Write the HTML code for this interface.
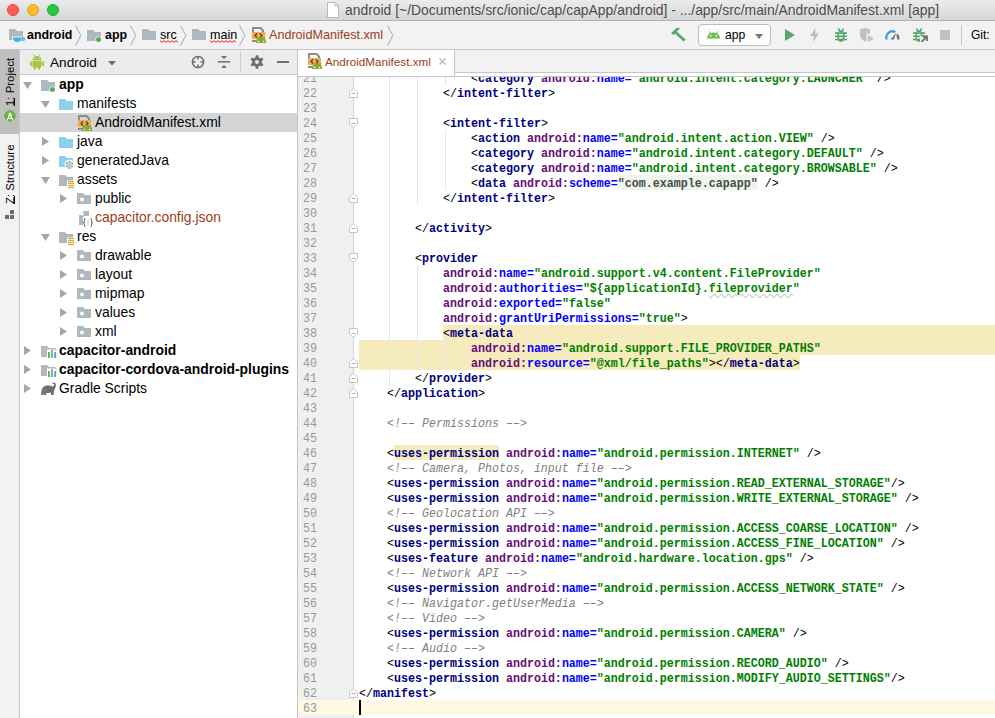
<!DOCTYPE html>
<html><head><meta charset="utf-8">
<style>
*{margin:0;padding:0;box-sizing:border-box}
html,body{width:995px;height:718px;overflow:hidden;background:#fff;font-family:"Liberation Sans",sans-serif;position:relative}
.a{position:absolute}
.tl{width:12px;height:12px;border-radius:50%;top:4px}
.bc{top:28px;font-size:12.6px;color:#000;white-space:nowrap;line-height:15px}
.tr{height:19px;font-size:13.9px;line-height:19px;white-space:nowrap;color:#000}
.ln{position:absolute;left:297px;width:20px;text-align:right;font-family:"Liberation Mono",monospace;font-size:11.67px;line-height:15px;color:#999;white-space:pre;transform:scaleY(1.13);transform-origin:0 10px}
.cl{position:absolute;left:359px;height:15px;line-height:15px;font-family:"Liberation Mono",monospace;font-size:11.67px;font-weight:bold;white-space:pre;color:#000;transform:scaleY(1.1);transform-origin:0 10px}
.t{color:#000080}.br{color:#000;font-weight:normal}.ns{color:#660e7a}.at{color:#0000ff}.v{color:#008000}.c{color:#808080;font-style:italic;font-weight:normal}
.hl{color:#000080}.sch{color:#4a4a4a}.typo{color:#008000;text-decoration:underline wavy #b8d0b8;text-decoration-thickness:0.6px}
</style></head><body>
<div class="a" style="left:0;top:0;width:995px;height:21px;background:linear-gradient(#ececec,#d6d6d6);border-bottom:1px solid #b4b4b4"></div>
<div class="a tl" style="left:7px;background:#fd5f57;border:0.5px solid #e0443e"></div>
<div class="a tl" style="left:27px;background:#febc2e;border:0.5px solid #dea123"></div>
<div class="a tl" style="left:47px;background:#28c840;border:0.5px solid #1aab29"></div>
<svg class="a" style="left:327px;top:2px" width="12" height="16" viewBox="0 0 12 16"><path d="M0.5,0.5H8L11.5,4V15.5H0.5Z" fill="#fff" stroke="#b8b8b8"/><path d="M8,0.5V4H11.5" fill="none" stroke="#b8b8b8"/></svg>
<div class="a" style="left:345px;top:2px;font-size:13.9px;line-height:17px;color:#4d4d4d;white-space:nowrap">android [~/Documents/src/ionic/cap/capApp/android] - .../app/src/main/AndroidManifest.xml [app]</div>

<div class="a" style="left:0;top:21px;width:995px;height:29px;background:#f2f2f2;border-bottom:1px solid #c6c6c6"></div>
<div class="a bc" style="left:27px;font-weight:bold;font-size:12.4px">android</div><div class="a bc" style="left:105px;font-weight:bold;font-size:12.4px">app</div><div class="a bc" style="left:160px;">src</div><div class="a bc" style="left:210px;">main</div><div class="a bc" style="left:269px;color:#9e3c1c">AndroidManifest.xml</div>

<div class="a" style="left:0;top:50px;width:20px;height:668px;background:#f2f2f2;border-right:1px solid #c6c6c6"></div>
<div class="a" style="left:0;top:50px;width:19px;height:84px;background:#bfbfbf"></div>
<div class="a" style="left:20px;top:50px;width:277px;height:25px;background:#ececec;border-bottom:1px solid #c6c6c6"></div>
<div class="a" style="left:23px;top:82px;line-height:0"><svg width="9" height="8" viewBox="0 0 9 8"><path d="M0,0H9L4.5,7Z" fill="#a6a6a6"/></svg></div><div class="a" style="left:41px;top:77px;line-height:0"><svg width="16" height="17" viewBox="0 0 16 17"><path d="M0,3H6L8,5H14V14H0Z" fill="#adb8bf"/><circle cx="11.5" cy="12.5" r="3.1" fill="#fff"/><circle cx="11.5" cy="12.5" r="2.5" fill="#59a869"/></svg></div><div class="a tr" style="left:59px;top:75px;font-weight:bold;">app</div><div class="a" style="left:41px;top:101px;line-height:0"><svg width="9" height="8" viewBox="0 0 9 8"><path d="M0,0H9L4.5,7Z" fill="#a6a6a6"/></svg></div><div class="a" style="left:59px;top:96px;line-height:0"><svg width="16" height="17" viewBox="0 0 16 17"><path d="M0,3H6L8,5H14V14H0Z" fill="#8dd0ee"/></svg></div><div class="a tr" style="left:77px;top:94px;">manifests</div><div class="a" style="left:20px;top:113px;width:277px;height:19px;background:#d5d5d5"></div><div class="a" style="left:77px;top:115px;line-height:0"><svg width="16" height="17" viewBox="0 0 16 17"><g transform="translate(1,0)"><path d="M1,1H8.5L11,3.5V5" fill="none" stroke="#8c8c8c" stroke-width="2"/><path d="M1,0V5" stroke="#8c8c8c" stroke-width="2"/><rect x="0" y="5" width="13" height="7" fill="#f4a94c"/><path d="M5,6.5L3,8.5L5,10.5M8,6.5L10,8.5L8,10.5" fill="none" stroke="#3c3c3c" stroke-width="1.1"/><rect x="0" y="13" width="4" height="2" fill="#8c8c8c"/><path d="M4,16V14.5A5,4.5 0 0 1 14,14.5V16Z" fill="#86ab2f"/><path d="M5,10L6,11.5M13,10L12,11.5" stroke="#86ab2f"/><circle cx="6.5" cy="14.5" r="0.8" fill="#fff"/><circle cx="11.5" cy="14.5" r="0.8" fill="#fff"/></g></svg></div><div class="a tr" style="left:95px;top:113px;">AndroidManifest.xml</div><div class="a" style="left:42px;top:137px;line-height:0"><svg width="8" height="9" viewBox="0 0 8 9"><path d="M0,0V9L7,4.5Z" fill="#a6a6a6"/></svg></div><div class="a" style="left:59px;top:134px;line-height:0"><svg width="16" height="17" viewBox="0 0 16 17"><path d="M0,3H6L8,5H14V14H0Z" fill="#8dd0ee"/></svg></div><div class="a tr" style="left:77px;top:132px;">java</div><div class="a" style="left:42px;top:156px;line-height:0"><svg width="8" height="9" viewBox="0 0 8 9"><path d="M0,0V9L7,4.5Z" fill="#a6a6a6"/></svg></div><div class="a" style="left:59px;top:153px;line-height:0"><svg width="16" height="17" viewBox="0 0 16 17"><path d="M0,3H6L8,5H14V14H0Z" fill="#8dd0ee"/><circle cx="10.5" cy="11.8" r="5" fill="#fff"/><path d="M10.5,11.8L9.2,7.8A4.3,4.3 0 0 1 12.5,8.2Z" fill="#adb8bf" transform="rotate(0 10.5 11.8)"/><path d="M10.5,11.8L9.2,7.8A4.3,4.3 0 0 1 12.5,8.2Z" fill="#adb8bf" transform="rotate(60 10.5 11.8)"/><path d="M10.5,11.8L9.2,7.8A4.3,4.3 0 0 1 12.5,8.2Z" fill="#adb8bf" transform="rotate(120 10.5 11.8)"/><path d="M10.5,11.8L9.2,7.8A4.3,4.3 0 0 1 12.5,8.2Z" fill="#adb8bf" transform="rotate(180 10.5 11.8)"/><path d="M10.5,11.8L9.2,7.8A4.3,4.3 0 0 1 12.5,8.2Z" fill="#adb8bf" transform="rotate(240 10.5 11.8)"/><path d="M10.5,11.8L9.2,7.8A4.3,4.3 0 0 1 12.5,8.2Z" fill="#adb8bf" transform="rotate(300 10.5 11.8)"/></svg></div><div class="a tr" style="left:77px;top:151px;">generatedJava</div><div class="a" style="left:41px;top:177px;line-height:0"><svg width="9" height="8" viewBox="0 0 9 8"><path d="M0,0H9L4.5,7Z" fill="#a6a6a6"/></svg></div><div class="a" style="left:59px;top:172px;line-height:0"><svg width="16" height="17" viewBox="0 0 16 17"><path d="M0,3H6L8,5H14V14H0Z" fill="#adb8bf"/><rect x="8" y="8.5" width="8" height="8.5" fill="#fff"/><g fill="#e3a33b"><rect x="9" y="9" width="6" height="1.2"/><rect x="9" y="11" width="6" height="1.2"/><rect x="9" y="13" width="6" height="1.2"/><rect x="9" y="15" width="6" height="1.2"/></g></svg></div><div class="a tr" style="left:77px;top:170px;">assets</div><div class="a" style="left:60px;top:194px;line-height:0"><svg width="8" height="9" viewBox="0 0 8 9"><path d="M0,0V9L7,4.5Z" fill="#a6a6a6"/></svg></div><div class="a" style="left:77px;top:191px;line-height:0"><svg width="16" height="17" viewBox="0 0 16 17"><path d="M0,2H6L8,4H14V13H0Z" fill="#adb8bf"/><circle cx="5" cy="8.6" r="2" fill="#fff"/></svg></div><div class="a tr" style="left:95px;top:189px;">public</div><div class="a" style="left:77px;top:210px;line-height:0"><svg width="16" height="17" viewBox="0 0 16 17"><path d="M2,5.5L6.5,1H12V6H7V15H2Z" fill="#adb8bf"/><path d="M2.5,5.2L6.5,1.2V5.2Z" fill="#fff"/><rect x="6" y="7" width="10" height="10" fill="#fff"/><path d="M8.5,8.5C7,8.5 7.5,10.5 7.5,11C7.5,12 6.5,12.5 6.5,12.5C6.5,12.5 7.5,13 7.5,14C7.5,14.5 7,16.5 8.5,16.5M13.5,8.5C15,8.5 14.5,10.5 14.5,11C14.5,12 15.5,12.5 15.5,12.5C15.5,12.5 14.5,13 14.5,14C14.5,14.5 15,16.5 13.5,16.5" fill="none" stroke="#6e7a82" stroke-width="1.1"/><path d="M11,9.5V15.5" stroke="#c0c8ce" stroke-width="1"/></svg></div><div class="a tr" style="left:95px;top:208px;color:#9e3c1c;">capacitor.config.json</div><div class="a" style="left:41px;top:234px;line-height:0"><svg width="9" height="8" viewBox="0 0 9 8"><path d="M0,0H9L4.5,7Z" fill="#a6a6a6"/></svg></div><div class="a" style="left:59px;top:229px;line-height:0"><svg width="16" height="17" viewBox="0 0 16 17"><path d="M0,3H6L8,5H14V14H0Z" fill="#adb8bf"/><rect x="8" y="8.5" width="8" height="8.5" fill="#fff"/><g fill="#e3a33b"><rect x="9" y="9" width="6" height="1.2"/><rect x="9" y="11" width="6" height="1.2"/><rect x="9" y="13" width="6" height="1.2"/><rect x="9" y="15" width="6" height="1.2"/></g></svg></div><div class="a tr" style="left:77px;top:227px;">res</div><div class="a" style="left:60px;top:251px;line-height:0"><svg width="8" height="9" viewBox="0 0 8 9"><path d="M0,0V9L7,4.5Z" fill="#a6a6a6"/></svg></div><div class="a" style="left:77px;top:248px;line-height:0"><svg width="16" height="17" viewBox="0 0 16 17"><path d="M0,2H6L8,4H14V13H0Z" fill="#adb8bf"/><circle cx="5" cy="8.6" r="2" fill="#fff"/></svg></div><div class="a tr" style="left:95px;top:246px;">drawable</div><div class="a" style="left:60px;top:270px;line-height:0"><svg width="8" height="9" viewBox="0 0 8 9"><path d="M0,0V9L7,4.5Z" fill="#a6a6a6"/></svg></div><div class="a" style="left:77px;top:267px;line-height:0"><svg width="16" height="17" viewBox="0 0 16 17"><path d="M0,2H6L8,4H14V13H0Z" fill="#adb8bf"/><circle cx="5" cy="8.6" r="2" fill="#fff"/></svg></div><div class="a tr" style="left:95px;top:265px;">layout</div><div class="a" style="left:60px;top:289px;line-height:0"><svg width="8" height="9" viewBox="0 0 8 9"><path d="M0,0V9L7,4.5Z" fill="#a6a6a6"/></svg></div><div class="a" style="left:77px;top:286px;line-height:0"><svg width="16" height="17" viewBox="0 0 16 17"><path d="M0,2H6L8,4H14V13H0Z" fill="#adb8bf"/><circle cx="5" cy="8.6" r="2" fill="#fff"/></svg></div><div class="a tr" style="left:95px;top:284px;">mipmap</div><div class="a" style="left:60px;top:308px;line-height:0"><svg width="8" height="9" viewBox="0 0 8 9"><path d="M0,0V9L7,4.5Z" fill="#a6a6a6"/></svg></div><div class="a" style="left:77px;top:305px;line-height:0"><svg width="16" height="17" viewBox="0 0 16 17"><path d="M0,2H6L8,4H14V13H0Z" fill="#adb8bf"/><circle cx="5" cy="8.6" r="2" fill="#fff"/></svg></div><div class="a tr" style="left:95px;top:303px;">values</div><div class="a" style="left:60px;top:327px;line-height:0"><svg width="8" height="9" viewBox="0 0 8 9"><path d="M0,0V9L7,4.5Z" fill="#a6a6a6"/></svg></div><div class="a" style="left:77px;top:324px;line-height:0"><svg width="16" height="17" viewBox="0 0 16 17"><path d="M0,2H6L8,4H14V13H0Z" fill="#adb8bf"/><circle cx="5" cy="8.6" r="2" fill="#fff"/></svg></div><div class="a tr" style="left:95px;top:322px;">xml</div><div class="a" style="left:24px;top:346px;line-height:0"><svg width="8" height="9" viewBox="0 0 8 9"><path d="M0,0V9L7,4.5Z" fill="#a6a6a6"/></svg></div><div class="a" style="left:41px;top:343px;line-height:0"><svg width="16" height="17" viewBox="0 0 16 17"><path d="M0,3H6L8,5H14V14H0Z" fill="#b0bac1"/><rect x="6" y="6" width="10" height="11" fill="#fff"/><rect x="7" y="9" width="1.8" height="6" fill="#4db34a"/><rect x="10.1" y="7" width="1.8" height="8" fill="#8d9aa3"/><rect x="13.3" y="9" width="1.8" height="6" fill="#3aa9df"/><path d="M6,6H15V8" fill="none" stroke="#b0bac1" stroke-width="1"/></svg></div><div class="a tr" style="left:59px;top:341px;font-weight:bold;">capacitor-android</div><div class="a" style="left:24px;top:365px;line-height:0"><svg width="8" height="9" viewBox="0 0 8 9"><path d="M0,0V9L7,4.5Z" fill="#a6a6a6"/></svg></div><div class="a" style="left:41px;top:362px;line-height:0"><svg width="16" height="17" viewBox="0 0 16 17"><path d="M0,3H6L8,5H14V14H0Z" fill="#b0bac1"/><rect x="6" y="6" width="10" height="11" fill="#fff"/><rect x="7" y="9" width="1.8" height="6" fill="#4db34a"/><rect x="10.1" y="7" width="1.8" height="8" fill="#8d9aa3"/><rect x="13.3" y="9" width="1.8" height="6" fill="#3aa9df"/><path d="M6,6H15V8" fill="none" stroke="#b0bac1" stroke-width="1"/></svg></div><div class="a tr" style="left:59px;top:360px;font-weight:bold;">capacitor-cordova-android-plugins</div><div class="a" style="left:24px;top:384px;line-height:0"><svg width="8" height="9" viewBox="0 0 8 9"><path d="M0,0V9L7,4.5Z" fill="#a6a6a6"/></svg></div><div class="a" style="left:41px;top:381px;line-height:0"><svg width="16" height="17" viewBox="0 0 16 17"><path d="M0.3,13.9C0.1,9.5 1.2,6.2 4,5.1C7,4.1 9.8,4.8 11.6,5.8C12.6,5.2 13.3,4.2 13.3,3.3C13.2,2.6 12.4,2.5 11.8,2.9L11.1,2.3C12.3,1.2 14.6,1.3 14.9,3.2C15.1,5.3 13.9,8.2 12.9,10L12.6,13.9H10.2L9.7,11.6C8.2,12 6.7,12 5.6,11.7L5.2,13.9H3.2L2.9,11.8L2.5,13.9Z" fill="#6e6e6e"/><path d="M3,8.3L5.5,9" stroke="#9a9a9a" stroke-width="0.7"/></svg></div><div class="a tr" style="left:59px;top:379px;">Gradle Scripts</div>
<div class="a" style="left:297px;top:50px;width:1px;height:668px;background:#c6c6c6"></div>

<div class="a" style="left:298px;top:50px;width:697px;height:23px;background:#f2f2f2;border-bottom:1px solid #c6c6c6"></div>
<div class="a" style="left:298px;top:73px;width:697px;height:3px;background:#fff"></div>
<div class="a" style="left:298px;top:50px;width:157px;height:26px;background:#fff;border-right:1px solid #c6c6c6"></div>
<div class="a" style="left:298px;top:76px;width:697px;height:1px;background:#c6c6c6"></div>
<div class="a" style="left:325px;top:54px;font-size:11.7px;line-height:16px;color:#9e3c1c;white-space:nowrap">AndroidManifest.xml</div>

<div class="a" style="left:298px;top:77px;width:55px;height:641px;background:#f0f0f0"></div>
<div class="a" style="left:353px;top:77px;width:1px;height:641px;background:#d4d4d4"></div>
<div class="a" style="left:298px;top:77px;width:697px;height:641px;overflow:hidden">
<div class="a" style="left:-298px;top:-77px;width:995px;height:718px">
<div class="a" style="left:298px;top:700px;width:697px;height:15px;background:#fff8e3"></div><div class="a" style="left:443px;top:325px;width:552px;height:15px;background:#f6ebbc"></div><div class="a" style="left:359px;top:340px;width:636px;height:15px;background:#f6ebbc"></div><div class="a" style="left:359px;top:355px;width:441px;height:15px;background:#f6ebbc"></div><div class="a" style="left:394px;top:445px;width:105px;height:15px;background:#f6ebbc"></div><div class="a" style="left:618px;top:175px;width:140px;height:15px;background:#edf5ec"></div><div class="a" style="left:389px;top:77px;width:1px;height:308px;background:#e6e6e6"></div><div class="a" style="left:417px;top:77px;width:1px;height:128px;background:#e6e6e6"></div><div class="a" style="left:417px;top:265px;width:1px;height:105px;background:#e6e6e6"></div><div class="a" style="left:445px;top:77px;width:1px;height:8px;background:#e6e6e6"></div><div class="a" style="left:445px;top:130px;width:1px;height:60px;background:#e6e6e6"></div><div class="a" style="left:445px;top:340px;width:1px;height:30px;background:#e6e6e6"></div><div class="cl" style="top:72px">                <span class="br">&lt;</span><span class="t">category </span><span class="ns">android:</span><span class="at">name=</span><span class="v">&quot;android.intent.category.LAUNCHER&quot;</span><span class="t"> </span><span class="br">/&gt;</span></div><div class="cl" style="top:87px">            <span class="br">&lt;/</span><span class="t">intent-filter</span><span class="br">&gt;</span></div><div class="cl" style="top:102px"></div><div class="cl" style="top:117px">            <span class="br">&lt;</span><span class="t">intent-filter</span><span class="br">&gt;</span></div><div class="cl" style="top:132px">                <span class="br">&lt;</span><span class="t">action </span><span class="ns">android:</span><span class="at">name=</span><span class="v">&quot;android.intent.action.VIEW&quot;</span><span class="t"> </span><span class="br">/&gt;</span></div><div class="cl" style="top:147px">                <span class="br">&lt;</span><span class="t">category </span><span class="ns">android:</span><span class="at">name=</span><span class="v">&quot;android.intent.category.DEFAULT&quot;</span><span class="t"> </span><span class="br">/&gt;</span></div><div class="cl" style="top:162px">                <span class="br">&lt;</span><span class="t">category </span><span class="ns">android:</span><span class="at">name=</span><span class="v">&quot;android.intent.category.BROWSABLE&quot;</span><span class="t"> </span><span class="br">/&gt;</span></div><div class="cl" style="top:177px">                <span class="br">&lt;</span><span class="t">data </span><span class="ns">android:</span><span class="at">scheme=</span><span class="sch">&quot;com.example.capapp&quot;</span><span class="t"> </span><span class="br">/&gt;</span></div><div class="cl" style="top:192px">            <span class="br">&lt;/</span><span class="t">intent-filter</span><span class="br">&gt;</span></div><div class="cl" style="top:207px"></div><div class="cl" style="top:222px">        <span class="br">&lt;/</span><span class="t">activity</span><span class="br">&gt;</span></div><div class="cl" style="top:237px"></div><div class="cl" style="top:252px">        <span class="br">&lt;</span><span class="t">provider</span></div><div class="cl" style="top:267px">            <span class="ns">android:</span><span class="at">name=</span><span class="v">&quot;android.support.v4.content.FileProvider&quot;</span></div><div class="cl" style="top:282px">            <span class="ns">android:</span><span class="at">authorities=</span><span class="v">&quot;${applicationId}.</span><span class="typo">fileprovider</span><span class="v">&quot;</span></div><div class="cl" style="top:297px">            <span class="ns">android:</span><span class="at">exported=</span><span class="v">&quot;false&quot;</span></div><div class="cl" style="top:312px">            <span class="ns">android:</span><span class="at">grantUriPermissions=</span><span class="v">&quot;true&quot;</span><span class="br">&gt;</span></div><div class="cl" style="top:327px">            <span class="br">&lt;</span><span class="t">meta-data</span></div><div class="cl" style="top:342px">                <span class="ns">android:</span><span class="at">name=</span><span class="v">&quot;android.support.FILE_PROVIDER_PATHS&quot;</span></div><div class="cl" style="top:357px">                <span class="ns">android:</span><span class="at">resource=</span><span class="v">&quot;@xml/file_paths&quot;</span><span class="br">&gt;</span><span class="br">&lt;/</span><span class="t">meta-data</span><span class="br">&gt;</span></div><div class="cl" style="top:372px">        <span class="br">&lt;/</span><span class="t">provider</span><span class="br">&gt;</span></div><div class="cl" style="top:387px">    <span class="br">&lt;/</span><span class="t">application</span><span class="br">&gt;</span></div><div class="cl" style="top:402px"></div><div class="cl" style="top:417px">    <span class="c">&lt;!–– Permissions ––&gt;</span></div><div class="cl" style="top:432px"></div><div class="cl" style="top:447px">    <span class="br">&lt;</span><span class="hl">uses-permission</span><span class="t"> </span><span class="ns">android:</span><span class="at">name=</span><span class="v">&quot;android.permission.INTERNET&quot;</span><span class="t"> </span><span class="br">/&gt;</span></div><div class="cl" style="top:462px">    <span class="c">&lt;!–– Camera, Photos, input file ––&gt;</span></div><div class="cl" style="top:477px">    <span class="br">&lt;</span><span class="t">uses-permission </span><span class="ns">android:</span><span class="at">name=</span><span class="v">&quot;android.permission.READ_EXTERNAL_STORAGE&quot;</span><span class="br">/&gt;</span></div><div class="cl" style="top:492px">    <span class="br">&lt;</span><span class="t">uses-permission </span><span class="ns">android:</span><span class="at">name=</span><span class="v">&quot;android.permission.WRITE_EXTERNAL_STORAGE&quot;</span><span class="t"> </span><span class="br">/&gt;</span></div><div class="cl" style="top:507px">    <span class="c">&lt;!–– Geolocation API ––&gt;</span></div><div class="cl" style="top:522px">    <span class="br">&lt;</span><span class="t">uses-permission </span><span class="ns">android:</span><span class="at">name=</span><span class="v">&quot;android.permission.ACCESS_COARSE_LOCATION&quot;</span><span class="t"> </span><span class="br">/&gt;</span></div><div class="cl" style="top:537px">    <span class="br">&lt;</span><span class="t">uses-permission </span><span class="ns">android:</span><span class="at">name=</span><span class="v">&quot;android.permission.ACCESS_FINE_LOCATION&quot;</span><span class="t"> </span><span class="br">/&gt;</span></div><div class="cl" style="top:552px">    <span class="br">&lt;</span><span class="t">uses-feature </span><span class="ns">android:</span><span class="at">name=</span><span class="v">&quot;android.hardware.location.gps&quot;</span><span class="t"> </span><span class="br">/&gt;</span></div><div class="cl" style="top:567px">    <span class="c">&lt;!–– Network API ––&gt;</span></div><div class="cl" style="top:582px">    <span class="br">&lt;</span><span class="t">uses-permission </span><span class="ns">android:</span><span class="at">name=</span><span class="v">&quot;android.permission.ACCESS_NETWORK_STATE&quot;</span><span class="t"> </span><span class="br">/&gt;</span></div><div class="cl" style="top:597px">    <span class="c">&lt;!–– Navigator.getUserMedia ––&gt;</span></div><div class="cl" style="top:612px">    <span class="c">&lt;!–– Video ––&gt;</span></div><div class="cl" style="top:627px">    <span class="br">&lt;</span><span class="t">uses-permission </span><span class="ns">android:</span><span class="at">name=</span><span class="v">&quot;android.permission.CAMERA&quot;</span><span class="t"> </span><span class="br">/&gt;</span></div><div class="cl" style="top:642px">    <span class="c">&lt;!–– Audio ––&gt;</span></div><div class="cl" style="top:657px">    <span class="br">&lt;</span><span class="t">uses-permission </span><span class="ns">android:</span><span class="at">name=</span><span class="v">&quot;android.permission.RECORD_AUDIO&quot;</span><span class="t"> </span><span class="br">/&gt;</span></div><div class="cl" style="top:672px">    <span class="br">&lt;</span><span class="t">uses-permission </span><span class="ns">android:</span><span class="at">name=</span><span class="v">&quot;android.permission.MODIFY_AUDIO_SETTINGS&quot;</span><span class="br">/&gt;</span></div><div class="cl" style="top:687px"><span class="br">&lt;/</span><span class="t">manifest</span><span class="br">&gt;</span></div><div class="cl" style="top:702px"></div>
<div class="ln" style="top:72px">21</div><div class="ln" style="top:87px">22</div><div class="ln" style="top:102px">23</div><div class="ln" style="top:117px">24</div><div class="ln" style="top:132px">25</div><div class="ln" style="top:147px">26</div><div class="ln" style="top:162px">27</div><div class="ln" style="top:177px">28</div><div class="ln" style="top:192px">29</div><div class="ln" style="top:207px">30</div><div class="ln" style="top:222px">31</div><div class="ln" style="top:237px">32</div><div class="ln" style="top:252px">33</div><div class="ln" style="top:267px">34</div><div class="ln" style="top:282px">35</div><div class="ln" style="top:297px">36</div><div class="ln" style="top:312px">37</div><div class="ln" style="top:327px">38</div><div class="ln" style="top:342px">39</div><div class="ln" style="top:357px">40</div><div class="ln" style="top:372px">41</div><div class="ln" style="top:387px">42</div><div class="ln" style="top:402px">43</div><div class="ln" style="top:417px">44</div><div class="ln" style="top:432px">45</div><div class="ln" style="top:447px">46</div><div class="ln" style="top:462px">47</div><div class="ln" style="top:477px">48</div><div class="ln" style="top:492px">49</div><div class="ln" style="top:507px">50</div><div class="ln" style="top:522px">51</div><div class="ln" style="top:537px">52</div><div class="ln" style="top:552px">53</div><div class="ln" style="top:567px">54</div><div class="ln" style="top:582px">55</div><div class="ln" style="top:597px">56</div><div class="ln" style="top:612px">57</div><div class="ln" style="top:627px">58</div><div class="ln" style="top:642px">59</div><div class="ln" style="top:657px">60</div><div class="ln" style="top:672px">61</div><div class="ln" style="top:687px">62</div><div class="ln" style="top:702px">63</div>
<svg class="a" style="left:349px;top:118px" width="9" height="10" viewBox="0 0 9 10"><path d="M0.5,0.5 H8.5 V6 L4.5,9.5 L0.5,6 Z" fill="#fff" stroke="#c6c6c6"/><path d="M2.5,5.5H6.5" stroke="#b0b0b0"/></svg><svg class="a" style="left:349px;top:253px" width="9" height="10" viewBox="0 0 9 10"><path d="M0.5,0.5 H8.5 V6 L4.5,9.5 L0.5,6 Z" fill="#fff" stroke="#c6c6c6"/><path d="M2.5,5.5H6.5" stroke="#b0b0b0"/></svg><svg class="a" style="left:349px;top:328px" width="9" height="10" viewBox="0 0 9 10"><path d="M0.5,0.5 H8.5 V6 L4.5,9.5 L0.5,6 Z" fill="#fff" stroke="#c6c6c6"/><path d="M2.5,5.5H6.5" stroke="#b0b0b0"/></svg><svg class="a" style="left:349px;top:88px" width="9" height="10" viewBox="0 0 9 10"><path d="M0.5,9.5 H8.5 V4 L4.5,0.5 L0.5,4 Z" fill="#fff" stroke="#c6c6c6"/><path d="M2.5,5.5H6.5" stroke="#b0b0b0"/></svg><svg class="a" style="left:349px;top:193px" width="9" height="10" viewBox="0 0 9 10"><path d="M0.5,9.5 H8.5 V4 L4.5,0.5 L0.5,4 Z" fill="#fff" stroke="#c6c6c6"/><path d="M2.5,5.5H6.5" stroke="#b0b0b0"/></svg><svg class="a" style="left:349px;top:223px" width="9" height="10" viewBox="0 0 9 10"><path d="M0.5,9.5 H8.5 V4 L4.5,0.5 L0.5,4 Z" fill="#fff" stroke="#c6c6c6"/><path d="M2.5,5.5H6.5" stroke="#b0b0b0"/></svg><svg class="a" style="left:349px;top:358px" width="9" height="10" viewBox="0 0 9 10"><path d="M0.5,9.5 H8.5 V4 L4.5,0.5 L0.5,4 Z" fill="#fff" stroke="#c6c6c6"/><path d="M2.5,5.5H6.5" stroke="#b0b0b0"/></svg><svg class="a" style="left:349px;top:373px" width="9" height="10" viewBox="0 0 9 10"><path d="M0.5,9.5 H8.5 V4 L4.5,0.5 L0.5,4 Z" fill="#fff" stroke="#c6c6c6"/><path d="M2.5,5.5H6.5" stroke="#b0b0b0"/></svg><svg class="a" style="left:349px;top:388px" width="9" height="10" viewBox="0 0 9 10"><path d="M0.5,9.5 H8.5 V4 L4.5,0.5 L0.5,4 Z" fill="#fff" stroke="#c6c6c6"/><path d="M2.5,5.5H6.5" stroke="#b0b0b0"/></svg><svg class="a" style="left:349px;top:688px" width="9" height="10" viewBox="0 0 9 10"><path d="M0.5,9.5 H8.5 V4 L4.5,0.5 L0.5,4 Z" fill="#fff" stroke="#c6c6c6"/><path d="M2.5,5.5H6.5" stroke="#b0b0b0"/></svg>
<div class="a" style="left:359px;top:700px;width:2px;height:15px;background:#000"></div>
</div></div>
<svg class="a" style="left:9px;top:28px" width="16" height="15" viewBox="0 0 16 15"><path d="M0,1H6L8,3H14V12H0Z" fill="#adb8bf"/><path d="M3.5,9H13V10A4.75,4.5 0 0 1 3.5,10Z" fill="#40b6e0" stroke="#f2f2f2" stroke-width="1"/><path d="M12.5,10H14.3A1.1,1.1 0 0 1 14.3,12.2H12" fill="none" stroke="#40b6e0" stroke-width="1.3"/></svg><svg class="a" style="left:87px;top:30px" width="16" height="13" viewBox="0 0 16 13"><path d="M0,0H6L8,2H14V11H0Z" fill="#adb8bf"/><circle cx="11.5" cy="9.5" r="3.2" fill="#f2f2f2"/><circle cx="11.5" cy="9.5" r="2.5" fill="#59a869"/></svg><svg class="a" style="left:142px;top:29px" width="14" height="11" viewBox="0 0 14 11"><path d="M0,0H6L8,2H14V11H0Z" fill="#adb8bf"/></svg><svg class="a" style="left:192px;top:29px" width="14" height="11" viewBox="0 0 14 11"><path d="M0,0H6L8,2H14V11H0Z" fill="#adb8bf"/></svg><svg class="a" style="left:252px;top:27px" width="15" height="16" viewBox="0 0 15 16"><path d="M1,1H8.5L11,3.5V5" fill="none" stroke="#8c8c8c" stroke-width="2"/><path d="M1,0V5" stroke="#8c8c8c" stroke-width="2"/><rect x="0" y="5" width="13" height="7" fill="#f4a94c"/><path d="M5,6.5L3,8.5L5,10.5M8,6.5L10,8.5L8,10.5" fill="none" stroke="#3c3c3c" stroke-width="1.1"/><rect x="0" y="13" width="4" height="2" fill="#8c8c8c"/><path d="M4,16V14.5A5,4.5 0 0 1 14,14.5V16Z" fill="#86ab2f"/><path d="M5,10L6,11.5M13,10L12,11.5" stroke="#86ab2f"/><circle cx="6.5" cy="14.5" r="0.8" fill="#fff"/><circle cx="11.5" cy="14.5" r="0.8" fill="#fff"/></svg><svg class="a" style="left:75px;top:25px" width="7" height="21" viewBox="0 0 7 21"><path d="M0.5,0.5L5.8,10.5L0.5,20.5" fill="none" stroke="#a8a8a8" stroke-width="1"/></svg><svg class="a" style="left:130px;top:25px" width="7" height="21" viewBox="0 0 7 21"><path d="M0.5,0.5L5.8,10.5L0.5,20.5" fill="none" stroke="#a8a8a8" stroke-width="1"/></svg><svg class="a" style="left:180px;top:25px" width="7" height="21" viewBox="0 0 7 21"><path d="M0.5,0.5L5.8,10.5L0.5,20.5" fill="none" stroke="#a8a8a8" stroke-width="1"/></svg><svg class="a" style="left:239px;top:25px" width="7" height="21" viewBox="0 0 7 21"><path d="M0.5,0.5L5.8,10.5L0.5,20.5" fill="none" stroke="#a8a8a8" stroke-width="1"/></svg><svg class="a" style="left:387px;top:25px" width="7" height="21" viewBox="0 0 7 21"><path d="M0.5,0.5L5.8,10.5L0.5,20.5" fill="none" stroke="#a8a8a8" stroke-width="1"/></svg><svg class="a" style="left:160px;top:40px" width="20" height="3" viewBox="0 0 20 3"><polyline points="0,0.6 2,2.4 4,0.6 6,2.4 8,0.6 10,2.4 12,0.6 14,2.4 16,0.6 18,2.4" fill="none" stroke="#ff1a1a" stroke-width="1"/></svg><svg class="a" style="left:210px;top:40px" width="28" height="3" viewBox="0 0 28 3"><polyline points="0,0.6 2,2.4 4,0.6 6,2.4 8,0.6 10,2.4 12,0.6 14,2.4 16,0.6 18,2.4 20,0.6 22,2.4 24,0.6 26,2.4" fill="none" stroke="#ff1a1a" stroke-width="1"/></svg><svg class="a" style="left:670px;top:27px" width="17" height="15" viewBox="0 0 17 15"><path d="M1,6.3L6.3,1H10.2L3.6,7.9Z" fill="#59a869"/><path d="M5.5,3.5L15.7,12.4L13.6,14.5L3.8,5.6Z" fill="#59a869"/></svg><div class="a" style="left:698px;top:24px;width:73px;height:22px;background:#fdfdfd;border:1px solid #bdbdbd;border-radius:4px"></div><svg class="a" style="left:707px;top:31px" width="13" height="8" viewBox="0 0 13 8"><path d="M0,7.5A6.5,6 0 0 1 13,7.5Z" fill="#6cc04a"/><path d="M2,0.5L3.5,2.5M11,0.5L9.5,2.5" stroke="#6cc04a" stroke-width="1.2"/><circle cx="3.8" cy="4.8" r="0.9" fill="#fff"/><circle cx="9.2" cy="4.8" r="0.9" fill="#fff"/></svg><div class="a" style="left:725px;top:27px;font-size:12.2px;line-height:16px;color:#000">app</div><svg class="a" style="left:755px;top:34px" width="8" height="5" viewBox="0 0 8 5"><path d="M0,0H8L4,5Z" fill="#767676"/></svg><svg class="a" style="left:785px;top:29px" width="10" height="12" viewBox="0 0 10 12"><path d="M0,0L10,6L0,12Z" fill="#59a869"/></svg><svg class="a" style="left:810px;top:28px" width="9" height="14" viewBox="0 0 9 14"><path d="M5.5,0L0,8H4L3,14L9,5.5H5Z" fill="#bdbdbd"/></svg><svg class="a" style="left:835px;top:28px" width="12" height="14" viewBox="0 0 12 14"><path d="M3.3,0.6L5.1,2.9M8.7,0.6L6.9,2.9" stroke="#59a869" stroke-width="1.6"/><path d="M3.3,4.3A2.7,2 0 0 1 8.7,4.3Z" fill="#59a869"/><path d="M2.4,4.3H9.6V10A3.6,3.8 0 0 1 2.4,10Z" fill="#59a869"/><path d="M0,5.1H3M9,5.1H12M0,8.3H3M9,8.3H12M0,11.5H3M9,11.5H12" stroke="#59a869" stroke-width="1.6"/><rect x="4" y="6" width="3.8" height="1.5" fill="#f2f2f2"/><rect x="4" y="9.2" width="3.8" height="1.5" fill="#f2f2f2"/></svg><svg class="a" style="left:860px;top:28px" width="15" height="15" viewBox="0 0 15 15"><path d="M0,1.3L5,0L10,1.3V3H6.5V12.5L5,13.5C2,12 0,10 0,6Z" fill="#c0c0c0"/><path d="M7,3H10V5.5H7Z" fill="#c0c0c0"/><path d="M7.5,6.5L14.8,10.6L7.5,14.8Z" fill="#c0c0c0" stroke="#f2f2f2" stroke-width="0.8"/></svg><svg class="a" style="left:885px;top:29px" width="16" height="11" viewBox="0 0 16 11"><path d="M1.6,10.5A6.2,6.2 0 0 1 10.3,3" fill="none" stroke="#3a9ed8" stroke-width="2.3"/><path d="M12.2,4.6A6.2,6.2 0 0 1 14.4,10.5H12.2A4,4 0 0 0 11.3,7Z" fill="#6e6e6e"/><path d="M5.6,10.4L11.4,3.6L8.8,10.6Z" fill="#6e6e6e"/></svg><svg class="a" style="left:913px;top:28px" width="15" height="15" viewBox="0 0 15 15"><path d="M3.3,0.6L5.1,2.9M8.7,0.6L6.9,2.9" stroke="#59a869" stroke-width="1.6"/><path d="M3.3,4.3A2.7,2 0 0 1 8.7,4.3Z" fill="#59a869"/><path d="M2.4,4.3H9.6V10A3.6,3.8 0 0 1 2.4,10Z" fill="#59a869"/><path d="M0,5.1H3M9,5.1H12M0,8.3H3M9,8.3H12M0,11.5H3M9,11.5H12" stroke="#59a869" stroke-width="1.6"/><rect x="4" y="6" width="3.8" height="1.5" fill="#f2f2f2"/><rect x="4" y="9.2" width="3.8" height="1.5" fill="#f2f2f2"/><path d="M7,8H15V15H7Z" fill="#f2f2f2"/><path d="M8.5,13.8L13.5,8.8M9.5,8.5H14V13" fill="none" stroke="#6e6e6e" stroke-width="1.8"/></svg><div class="a" style="left:940px;top:30px;width:10px;height:10px;background:#c0c0c0"></div><div class="a" style="left:961px;top:25px;width:1px;height:20px;background:#c8c8c8"></div><div class="a" style="left:971px;top:27px;font-size:12px;line-height:16px;color:#000">Git:</div><svg class="a" style="left:30px;top:54px" width="14" height="16" viewBox="0 0 14 16"><path d="M4,0.3L5,2.5M10,0.3L9,2.5" stroke="#a4c639" stroke-width="0.9"/><path d="M2.5,6.5A4.5,4.5 0 0 1 11.5,6.5Z" fill="#a4c639"/><circle cx="5" cy="4.3" r="0.6" fill="#ececec"/><circle cx="9" cy="4.3" r="0.6" fill="#ececec"/><path d="M2.5,7.2H11.5V12.5A1,1 0 0 1 10.5,13.5H3.5A1,1 0 0 1 2.5,12.5Z" fill="#a4c639"/><rect x="0" y="7.2" width="1.8" height="5" rx="0.9" fill="#a4c639"/><rect x="12.2" y="7.2" width="1.8" height="5" rx="0.9" fill="#a4c639"/><rect x="4" y="12" width="1.8" height="4" rx="0.9" fill="#a4c639"/><rect x="8.2" y="12" width="1.8" height="4" rx="0.9" fill="#a4c639"/></svg><div class="a" style="left:50px;top:54px;font-size:13.6px;line-height:17px;color:#000">Android</div><svg class="a" style="left:108px;top:61px" width="8" height="5" viewBox="0 0 8 5"><path d="M0,0H8L4,4.5Z" fill="#6e6e6e"/></svg><svg class="a" style="left:191px;top:55px" width="14" height="14" viewBox="0 0 14 14"><circle cx="7" cy="7" r="5.6" fill="none" stroke="#6e6e6e" stroke-width="1.5"/><path d="M7,1V4.5M7,9.5V13M1,7H4.5M9.5,7H13" stroke="#6e6e6e" stroke-width="1.5"/></svg><svg class="a" style="left:218px;top:56px" width="12" height="12" viewBox="0 0 12 12"><path d="M0,5.8H12" stroke="#6e6e6e" stroke-width="1.5"/><path d="M3,0H9L6,3Z M3,12H9L6,9Z" fill="#6e6e6e"/></svg><div class="a" style="left:240px;top:52px;width:1px;height:20px;background:#cdcdcd"></div><svg class="a" style="left:250px;top:55px" width="14" height="14" viewBox="0 0 14 14"><g fill="#6e6e6e"><circle cx="7" cy="7" r="4.8"/><rect x="5.6" y="0.3" width="2.8" height="13.4" rx="0.6"/><rect x="5.6" y="0.3" width="2.8" height="13.4" rx="0.6" transform="rotate(60 7 7)"/><rect x="5.6" y="0.3" width="2.8" height="13.4" rx="0.6" transform="rotate(120 7 7)"/></g><circle cx="7" cy="7" r="2" fill="#ececec"/></svg><div class="a" style="left:277px;top:61px;width:12px;height:2px;background:#6e6e6e"></div><div class="a" style="left:1px;top:106px;width:47px;height:19px;transform-origin:0 0;transform:rotate(-90deg);font-size:11.4px;line-height:19px;color:#000;white-space:nowrap">1: Project</div><svg class="a" style="left:3.5px;top:110px" width="12" height="12" viewBox="0 0 12 12"><circle cx="6" cy="6" r="5.8" fill="#6ab344"/><path d="M6,2.5V5M6,4.5L3,10.5M6,4.5L9,10.5M3.5,8.5H8.5" stroke="#fff" stroke-width="1" fill="none"/><circle cx="6" cy="5" r="1.3" fill="none" stroke="#fff" stroke-width="0.9"/></svg><div class="a" style="left:1px;top:204px;width:61px;height:19px;transform-origin:0 0;transform:rotate(-90deg);font-size:11.4px;line-height:19px;color:#000;white-space:nowrap">Z: Structure</div><div class="a" style="left:14px;top:98px;width:1px;height:8px;background:#000"></div><div class="a" style="left:14px;top:196px;width:1px;height:8px;background:#000"></div><svg class="a" style="left:5px;top:210px" width="9" height="9" viewBox="0 0 9 9"><g fill="#6e6e6e"><rect x="5" y="0" width="4" height="4"/><rect x="0" y="5" width="4" height="4"/><rect x="5" y="5" width="4" height="4"/></g></svg><svg class="a" style="left:308px;top:53px" width="15" height="16" viewBox="0 0 15 16"><path d="M1,1H8.5L11,3.5V5" fill="none" stroke="#8c8c8c" stroke-width="2"/><path d="M1,0V5" stroke="#8c8c8c" stroke-width="2"/><rect x="0" y="5" width="13" height="7" fill="#f4a94c"/><path d="M5,6.5L3,8.5L5,10.5M8,6.5L10,8.5L8,10.5" fill="none" stroke="#3c3c3c" stroke-width="1.1"/><rect x="0" y="13" width="4" height="2" fill="#8c8c8c"/><path d="M4,16V14.5A5,4.5 0 0 1 14,14.5V16Z" fill="#86ab2f"/><path d="M5,10L6,11.5M13,10L12,11.5" stroke="#86ab2f"/><circle cx="6.5" cy="14.5" r="0.8" fill="#fff"/><circle cx="11.5" cy="14.5" r="0.8" fill="#fff"/></svg><svg class="a" style="left:439px;top:58px" width="7" height="7" viewBox="0 0 7 7"><path d="M0.5,0.5L6.5,6.5M6.5,0.5L0.5,6.5" stroke="#b3b3b3" stroke-width="1.1"/></svg>
</body></html>
